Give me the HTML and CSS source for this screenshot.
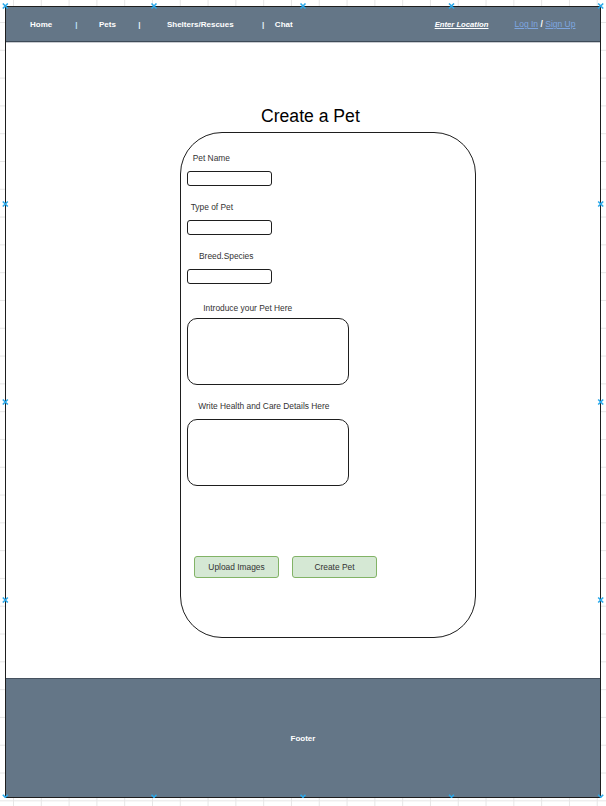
FILE: index.html
```html
<!DOCTYPE html>
<html lang="en">
<head>
<meta charset="utf-8">
<title>Create a Pet</title>
<link rel="stylesheet" href="styles.css">
</head>
<body>
<div class="frame">
  <header class="header">
    <a class="nav nav-home">Home</a>
    <span class="sep sep-1">|</span>
    <a class="nav nav-pets">Pets</a>
    <span class="sep sep-2">|</span>
    <a class="nav nav-shelters">Shelters/Rescues</a>
    <span class="sep sep-3">|</span>
    <a class="nav nav-chat">Chat</a>
    <a class="location">Enter Location</a>
    <span class="auth"><a class="auth-link">Log In</a> <b class="slash">/</b> <a class="auth-link">Sign Up</a></span>
  </header>
  <main class="main">
    <h1 class="title">Create a Pet</h1>
    <form class="card">
      <label class="label label-name">Pet Name</label>
      <div class="input input-first"></div>
      <label class="label label-type">Type of Pet</label>
      <div class="input"></div>
      <label class="label label-breed">Breed.Species</label>
      <div class="input"></div>
      <label class="label label-intro">Introduce your Pet Here</label>
      <div class="textarea textarea-intro"></div>
      <label class="label label-health">Write Health and Care Details Here</label>
      <div class="textarea textarea-health"></div>
      <div class="buttons">
        <button type="button" class="btn">Upload Images</button>
        <button type="button" class="btn">Create Pet</button>
      </div>
    </form>
  </main>
  <footer class="footer">Footer</footer>
</div>
<svg class="markers" width="606" height="806" viewBox="0 0 606 806" aria-hidden="true">
  <g stroke="#29a8ea" stroke-width="1.6" fill="none">
    <path d="M2.8 3.5l5 5M7.8 3.5l-5 5"/>
    <path d="M151.5 3.5l5 5M156.5 3.5l-5 5"/>
    <path d="M300.5 3.5l5 5M305.5 3.5l-5 5"/>
    <path d="M449 3.5l5 5M454 3.5l-5 5"/>
    <path d="M598.2 3.5l5 5M603.2 3.5l-5 5"/>
    <path d="M2.8 201.5l5 5M7.8 201.5l-5 5"/>
    <path d="M2.8 399.5l5 5M7.8 399.5l-5 5"/>
    <path d="M2.8 597.5l5 5M7.8 597.5l-5 5"/>
    <path d="M598.2 201.5l5 5M603.2 201.5l-5 5"/>
    <path d="M598.2 399.5l5 5M603.2 399.5l-5 5"/>
    <path d="M598.2 597.5l5 5M603.2 597.5l-5 5"/>
    <path d="M2.8 794.8l5 5M7.8 794.8l-5 5"/>
    <path d="M151.5 794.8l5 5M156.5 794.8l-5 5"/>
    <path d="M300.5 794.8l5 5M305.5 794.8l-5 5"/>
    <path d="M449 794.8l5 5M454 794.8l-5 5"/>
    <path d="M598.2 794.8l5 5M603.2 794.8l-5 5"/>
  </g>
</svg>
</body>
</html>
```
FILE: styles.css
```css
html {
  background-color: #ffffff;
  background-image:
    linear-gradient(to right, #e6e6e6 1px, transparent 1px),
    linear-gradient(to bottom, #e6e6e6 1px, transparent 1px);
  background-size: 27.8px 27.8px;
  background-position: 13px 22px;
}

body {
  margin: 0;
  padding: 6px 0 0 5px;
  font-family: "Liberation Sans", Arial, sans-serif;
  position: relative;
}

.frame {
  width: 596px;
  height: 792px;
  box-sizing: border-box;
  border: 1px solid #1e1e1e;
  background: #ffffff;
  display: flex;
  flex-direction: column;
}

.header {
  height: 35px;
  flex: none;
  box-sizing: border-box;
  background: #647687;
  border-bottom: 1px solid #3d4a57;
  box-shadow: 0 1px 0 #c9ccd1;
  display: flex;
  align-items: center;
  color: #ffffff;
  font-size: 8px;
  font-weight: bold;
  white-space: nowrap;
}

.nav { color: #ffffff; }
.nav-home { margin-left: 24px; }
.nav-pets { margin-left: 21.5px; }
.nav-shelters { margin-left: 26.4px; }
.nav-chat { margin-left: 10.7px; }

.sep { color: #e8f4fc; }
.sep-1 { margin-left: 23px; color: #bfe2fb; }
.sep-2 { margin-left: 22.4px; }
.sep-3 { margin-left: 28.3px; }

.location {
  margin-left: 142px;
  font-style: italic;
  text-decoration: underline;
  color: #ffffff;
  font-size: 7.7px;
}

.auth {
  margin-left: 26px;
  font-size: 8.5px;
  font-weight: normal;
}

.auth-link {
  color: #7ea6e0;
  text-decoration: underline;
}

.slash { color: #ffffff; }

.main {
  flex: 1;
  padding-left: 174px;
  display: flex;
  flex-direction: column;
  align-items: flex-start;
}

.title {
  margin: 64px 0 6px 81px;
  font-size: 17.6px;
  line-height: 20px;
  font-weight: normal;
  color: #000000;
}

.card {
  margin: 0;
  width: 296px;
  height: 506px;
  box-sizing: border-box;
  border: 1px solid #1e1e1e;
  border-radius: 42px;
  padding: 20px 0 0 6px;
  display: flex;
  flex-direction: column;
  align-items: flex-start;
}

.label {
  font-size: 8.4px;
  line-height: 10px;
  color: #333333;
}

.label-name { margin-left: 5.7px; }
.label-type { margin: 16px 0 0 3.7px; }
.label-breed { margin: 16px 0 0 12px; }
.label-intro { margin: 19px 0 0 16.3px; }
.label-health { margin: 16px 0 0 11.3px; }

.input {
  width: 85px;
  height: 15px;
  box-sizing: border-box;
  border: 1px solid #1e1e1e;
  border-radius: 3px;
  margin-top: 8px;
}

.textarea {
  width: 162px;
  height: 67px;
  box-sizing: border-box;
  border: 1px solid #1e1e1e;
  border-radius: 10px;
}

.textarea-intro { margin-top: 5px; }
.textarea-health { margin-top: 8px; }

.buttons {
  margin: 70px 0 0 7px;
  display: flex;
  gap: 13px;
}

.btn {
  width: 85px;
  height: 22px;
  box-sizing: border-box;
  background: #d5e8d4;
  border: 1px solid #82b366;
  border-radius: 3px;
  font-family: "Liberation Sans", Arial, sans-serif;
  font-size: 8.4px;
  color: #333333;
  padding: 0;
}

.footer {
  height: 119px;
  flex: none;
  box-sizing: border-box;
  background: #647687;
  border-top: 1px solid #46525f;
  color: #ffffff;
  font-size: 8px;
  font-weight: bold;
  display: flex;
  align-items: center;
  justify-content: center;
}

.markers {
  position: absolute;
  left: 0;
  top: 0;
  pointer-events: none;
}
```
